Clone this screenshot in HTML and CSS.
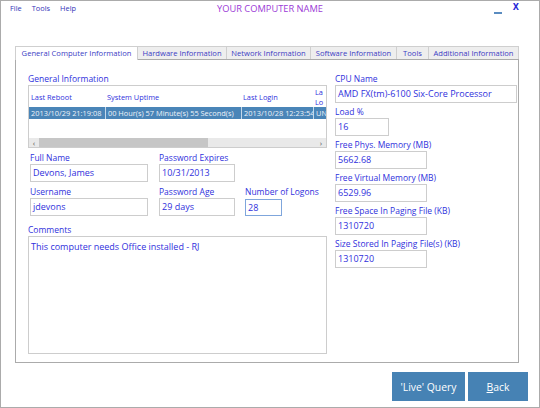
FILE: index.html
```html
<!DOCTYPE html>
<html lang="en">
<head>
  <meta charset="UTF-8" />
  <title>YOUR COMPUTER NAME</title>
  <link rel="stylesheet" href="styles.css">
</head>
<body>
  <div class="window">
    <div class="titlebar">
      <div class="menu">
        <span>File</span>
        <span>Tools</span>
        <span>Help</span>
      </div>
      <div class="title">YOUR COMPUTER NAME</div>
      <div class="controls">
        <span class="minimize"></span>
        <span class="close">X</span>
      </div>
    </div>

    <div class="tabs">
      <div class="tab active" style="width: 123px">General Computer Information</div>
      <div class="tab" style="width: 89px">Hardware Information</div>
      <div class="tab" style="width: 84px">Network Information</div>
      <div class="tab" style="width: 86px">Software Information</div>
      <div class="tab" style="width: 32px">Tools</div>
      <div class="tab" style="width: 90px">Additional Information</div>
    </div>

    <div class="panel">
      <div class="left">
        <div class="label">General Information</div>
        <div class="list">
          <div class="list-head">
            <div class="col c1">Last Reboot</div>
            <div class="col c2">System Uptime</div>
            <div class="col c3">Last Login</div>
            <div class="col c4 two-line">La<br>Lo</div>
          </div>
          <div class="list-row">
            <div class="col c1">2013/10/29 21:19:08</div>
            <div class="col c2">00 Hour(s) 57 Minute(s) 55 Second(s)</div>
            <div class="col c3">2013/10/28 12:23:54</div>
            <div class="col c4">UN</div>
          </div>
          <div class="hscroll">
            <span class="arrow">&lsaquo;</span>
            <span class="thumb"></span>
            <span class="arrow right">&rsaquo;</span>
          </div>
        </div>

        <div class="fields">
          <div class="field">
            <div class="label">Full Name</div>
            <div class="box w118">Devons, James</div>
          </div>
          <div class="field">
            <div class="label">Password Expires</div>
            <div class="box w75">10/31/2013</div>
          </div>
          <div></div>
          <div class="field">
            <div class="label">Username</div>
            <div class="box w118">jdevons</div>
          </div>
          <div class="field">
            <div class="label">Password Age</div>
            <div class="box w75">29 days</div>
          </div>
          <div class="field">
            <div class="label">Number of Logons</div>
            <div class="box w36 focused">28</div>
          </div>
        </div>

        <div class="label">Comments</div>
        <div class="comments">This computer needs Office installed - RJ</div>
      </div>

      <div class="right">
        <div class="label">CPU Name</div>
        <div class="box w182">AMD FX(tm)-6100 Six-Core Processor</div>
        <div class="label">Load %</div>
        <div class="box w54">16</div>
        <div class="label">Free Phys. Memory (MB)</div>
        <div class="box w92">5662.68</div>
        <div class="label">Free Virtual Memory (MB)</div>
        <div class="box w92">6529.96</div>
        <div class="label">Free Space In Paging File (KB)</div>
        <div class="box w92">1310720</div>
        <div class="label">Size Stored In Paging File(s) (KB)</div>
        <div class="box w92">1310720</div>
      </div>
    </div>

    <div class="actions">
      <button class="btn live">'Live' Query</button>
      <button class="btn back"><u>B</u>ack</button>
    </div>
  </div>
</body>
</html>
```

FILE: styles.css
```css
body {
  margin: 0;
  font-family: "Open Sans", "Noto Sans", sans-serif;
  background: #ffffff;
}
.window {
  width: 540px;
  height: 408px;
  box-sizing: border-box;
  border: 1px solid #ababab;
  background: white;
}
.titlebar {
  display: grid;
  grid-template-columns: 1fr auto 1fr;
  height: 20px;
  align-items: start;
}
.menu {
  display: flex;
  gap: 10px;
  padding: 2px 0 0 9px;
  font-size: 7.4px;
  color: #3434b8;
}
.title {
  padding-top: 1px;
  font-size: 9.3px;
  color: #9b3bd6;
}
.controls {
  display: flex;
  justify-content: flex-end;
  align-items: flex-start;
  padding-right: 20px;
}
.minimize {
  width: 8px;
  height: 2px;
  background: #5a8cc0;
  margin-top: 11px;
  margin-right: 11px;
}
.close {
  font-size: 8px;
  font-weight: bold;
  color: #2a2ad8;
  margin-top: 2px;
  font-family: "DejaVu Sans", sans-serif;
}
.tabs {
  display: flex;
  margin: 25px 0 0 14px;
  height: 13px;
}
.tab {
  box-sizing: border-box;
  height: 13px;
  border: 1px solid #cfcfcf;
  border-bottom: none;
  border-left: none;
  background: #eeeeee;
  color: #3b3bc4;
  font-size: 7.6px;
  line-height: 12px;
  text-align: center;
  white-space: nowrap;
  overflow: hidden;
}
.tab.active {
  background: white;
  border-left: 1px solid #cfcfcf;
  height: 14px;
  position: relative;
  z-index: 1;
}
.panel {
  display: flex;
  gap: 8px;
  box-sizing: border-box;
  width: 504px;
  height: 304px;
  margin-left: 14px;
  border: 1px solid #ababab;
  padding: 12px 0 0 12px;
}
.label {
  font-size: 8.5px;
  line-height: 13px;
  height: 13px;
  color: #3030dc;
  white-space: nowrap;
}
.left {
  width: 299px;
}
.right {
  width: 182px;
}
.box {
  box-sizing: border-box;
  height: 18px;
  border: 1px solid #cdcdcd;
  padding-left: 2px;
  font-size: 9px;
  line-height: 16px;
  color: #3030dc;
  white-space: nowrap;
  overflow: hidden;
}
.right .box {
  margin-bottom: 2px;
}
.w182 { width: 182px; }
.w118 { width: 118px; }
.w92 { width: 92px; }
.w75 { width: 76px; }
.w54 { width: 54px; }
.w36 { width: 37px; }
.focused {
  border-color: #7fa6dc;
}
.list {
  box-sizing: border-box;
  height: 63px;
  border: 1px solid #cdcdcd;
  display: flex;
  flex-direction: column;
  overflow: hidden;
}
.list-head, .list-row {
  display: flex;
  font-size: 7.4px;
  white-space: nowrap;
}
.list-head {
  height: 21px;
  align-items: center;
  color: #3030dc;
}
.list-row {
  height: 12px;
  line-height: 12px;
  background: #4a85b8;
  color: #eef3f8;
}
.col {
  box-sizing: border-box;
  padding-left: 2px;
  overflow: hidden;
  flex: none;
}
.list-row .col + .col {
  border-left: 1px solid #c5d8ea;
}
.c1 { width: 76px; }
.c2 { width: 136px; }
.c3 { width: 72px; }
.c4 { width: 13px; }
.two-line {
  line-height: 10px;
  padding-top: 1px;
}
.hscroll {
  margin-top: auto;
  height: 9px;
  background: #e9e9e9;
  display: flex;
  align-items: center;
}
.arrow {
  width: 10px;
  font-size: 8px;
  line-height: 9px;
  color: #555555;
  text-align: center;
  flex: none;
}
.arrow.right {
  margin-left: auto;
}
.thumb {
  width: 169px;
  height: 9px;
  background: #c6c6c6;
}
.fields {
  display: grid;
  grid-template-columns: 129px 86px 40px;
  row-gap: 3px;
  margin: 3px 0 7px 2px;
}
.fields .field:nth-child(6) .box {
  height: 17px;
  margin-top: 1px;
}
.comments {
  box-sizing: border-box;
  height: 118px;
  border: 1px solid #cdcdcd;
  padding: 2px 0 0 2px;
  font-size: 9px;
  line-height: 16px;
  color: #3030dc;
}
.actions {
  display: flex;
  justify-content: flex-end;
  gap: 3px;
  padding: 9px 11px 0 0;
}
.btn {
  height: 29px;
  border: none;
  background: #4682b4;
  color: white;
  font-family: "Open Sans", "Noto Sans", sans-serif;
  font-size: 10.4px;
  padding: 0;
}
.live { width: 73px; }
.back { width: 60px; }
```
